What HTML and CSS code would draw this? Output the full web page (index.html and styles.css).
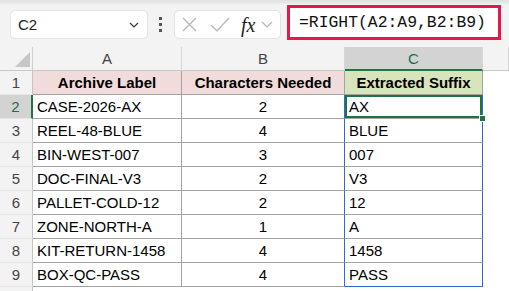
FILE: index.html
```html
<!DOCTYPE html>
<html lang="en">
<head>
    <meta charset="UTF-8">
    <title>RIGHT formula</title>
    <link rel="stylesheet" href="styles.css">
</head>
<body>

    <div class="toolbar">
        <div class="namebox">
            <span>C2</span>
            <svg width="10" height="6" viewBox="0 0 10 6"><path d="M1 1 L5 5 L9 1" fill="none" stroke="#333" stroke-width="1.2"/></svg>
        </div>
        <div class="grip"><i></i><i></i><i></i></div>
        <div class="fxtools">
            <svg class="cancel" width="15" height="15" viewBox="0 0 15 15"><path d="M1 1 L14 14 M14 1 L1 14" stroke="#b4b4b4" stroke-width="1.2"/></svg>
            <svg class="enter" width="20" height="15" viewBox="0 0 20 15"><path d="M1 8 L7 14 L19 1" fill="none" stroke="#b4b4b4" stroke-width="1.2"/></svg>
            <span class="fx">fx</span>
            <svg class="more" width="12" height="7" viewBox="0 0 12 7"><path d="M1 1 L6 6 L11 1" fill="none" stroke="#b4b4b4" stroke-width="1.2"/></svg>
        </div>
        <div class="formula">=RIGHT(A2:A9,B2:B9)</div>
    </div>

    <div class="sheet">
        <div class="corner"></div>
        <div class="ch">A</div>
        <div class="ch">B</div>
        <div class="ch sel">C</div>
        <div class="ch"></div>

        <div class="rh">1</div>
        <div class="cell head pink">Archive Label</div>
        <div class="cell head pink">Characters Needed</div>
        <div class="cell head green">Extracted Suffix</div>
        <div class="blank"></div>

        <div class="rh sel">2</div>
        <div class="cell">CASE-2026-AX</div>
        <div class="cell num next">2</div>
        <div class="cell spill active">AX</div>
        <div class="blank"></div>

        <div class="rh">3</div>
        <div class="cell">REEL-48-BLUE</div>
        <div class="cell num next">4</div>
        <div class="cell spill">BLUE</div>
        <div class="blank"></div>

        <div class="rh">4</div>
        <div class="cell">BIN-WEST-007</div>
        <div class="cell num next">3</div>
        <div class="cell spill">007</div>
        <div class="blank"></div>

        <div class="rh">5</div>
        <div class="cell">DOC-FINAL-V3</div>
        <div class="cell num next">2</div>
        <div class="cell spill">V3</div>
        <div class="blank"></div>

        <div class="rh">6</div>
        <div class="cell">PALLET-COLD-12</div>
        <div class="cell num next">2</div>
        <div class="cell spill">12</div>
        <div class="blank"></div>

        <div class="rh">7</div>
        <div class="cell">ZONE-NORTH-A</div>
        <div class="cell num next">1</div>
        <div class="cell spill">A</div>
        <div class="blank"></div>

        <div class="rh">8</div>
        <div class="cell">KIT-RETURN-1458</div>
        <div class="cell num next">4</div>
        <div class="cell spill">1458</div>
        <div class="blank"></div>

        <div class="rh">9</div>
        <div class="cell">BOX-QC-PASS</div>
        <div class="cell num next">4</div>
        <div class="cell spill last">PASS</div>
        <div class="blank"></div>

        <!-- row 10 only peeks in at the bottom edge -->
        <div class="rh"></div>
        <div class="blank"></div>
        <div class="blank"></div>
        <div class="blank"></div>
        <div class="blank"></div>
    </div>

</body>
</html>
```

FILE: styles.css
```css
body {
    margin: 0;
    width: 509px;
    height: 291px;
    overflow: hidden;
    background-color: #f3f3f3;
    font-family: "Liberation Sans", Arial, sans-serif;
}

/* formula bar */
.toolbar {
    display: flex;
    align-items: flex-start;
    height: 47px;
    box-sizing: border-box;
    background: linear-gradient(#e1e1e1 0, #e8e8e8 3px, #f3f3f3 5px);
}

.namebox {
    margin: 10px 0 0 10px;
    width: 138px;
    height: 29px;
    box-sizing: border-box;
    background-color: #fff;
    border: 1px solid #e2e2e2;
    border-radius: 5px;
    display: flex;
    align-items: center;
    justify-content: space-between;
    padding: 0 8px 0 7px;
    font-size: 15px;
    color: #222;
}

.grip {
    margin: 17px 0 0 11px;
    display: flex;
    flex-direction: column;
    gap: 3px;
}

.grip i {
    display: block;
    width: 3px;
    height: 3px;
    background-color: #555;
}

.fxtools {
    margin: 10px 0 0 12px;
    width: 107px;
    height: 29px;
    box-sizing: border-box;
    background-color: #fff;
    border: 1px solid #e2e2e2;
    border-radius: 5px;
    display: flex;
    align-items: center;
}

.fxtools .cancel {
    margin-left: 7px;
}

.fxtools .enter {
    margin-left: 13px;
}

.fxtools .fx {
    margin-left: 11px;
    font-family: "Liberation Serif", serif;
    font-style: italic;
    font-size: 20px;
    color: #222;
    line-height: 1;
}

.fxtools .more {
    margin-left: 6px;
}

.formula {
    margin: 5px 0 0 6px;
    width: 214px;
    height: 35px;
    box-sizing: border-box;
    border: 3px solid #e3194b;
    background-color: #fff;
    padding-left: 9px;
    font-family: "Liberation Mono", monospace;
    font-size: 16.4px;
    line-height: 29px;
    color: #111;
}

/* grid */
.sheet {
    display: grid;
    grid-template-columns: 33px 149px 163px 138px 1fr;
    grid-auto-rows: 24px;
    font-size: 15px;
}

.corner {
    position: relative;
    background-color: #f3f3f3;
    border-right: 1px solid #d0d0d0;
    border-bottom: 1px solid #c8c8c8;
}

.corner::after {
    content: "";
    position: absolute;
    right: 2px;
    bottom: 3px;
    width: 15px;
    height: 15px;
    background-color: #c6c6c6;
    clip-path: polygon(100% 0, 100% 100%, 0 100%);
}

.ch {
    background-color: #f3f3f3;
    border-right: 1px solid #d6d6d6;
    border-bottom: 1px solid #c8c8c8;
    text-align: center;
    line-height: 23px;
    color: #444;
}

.ch.sel {
    background-color: #d3d3d3;
    border-bottom: 2px solid #217346;
    color: #1e6b4e;
}

.rh {
    background-color: #f3f3f3;
    border-right: 1px solid #c4c4c4;
    border-bottom: 1px solid #e6e6e6;
    text-align: center;
    line-height: 23px;
    color: #444;
}

.rh.sel {
    background-color: #d3d3d3;
    border-right: 2px solid #217346;
    color: #1e6b4e;
}

.cell {
    box-sizing: border-box;
    background-color: #fff;
    border-right: 1px solid #a3a3a3;
    border-bottom: 1px solid #a3a3a3;
    padding: 0 4px;
    line-height: 23px;
    white-space: nowrap;
    color: #000;
}

.blank {
    background-color: #fff;
}

.head {
    font-weight: bold;
    text-align: center;
}

.pink {
    background-color: #f2dcdb;
}

.green {
    background-color: #d8e4bc;
}

.num {
    text-align: center;
}

.next,
.spill {
    border-right-color: #3268cf;
}

.spill.last {
    border-bottom-color: #3268cf;
}

.active {
    position: relative;
    box-shadow: inset 0 0 0 2px #217346;
}

.active::after {
    content: "";
    position: absolute;
    right: -4px;
    bottom: -4px;
    width: 5px;
    height: 5px;
    background-color: #217346;
    border: 1px solid #fff;
}
```
